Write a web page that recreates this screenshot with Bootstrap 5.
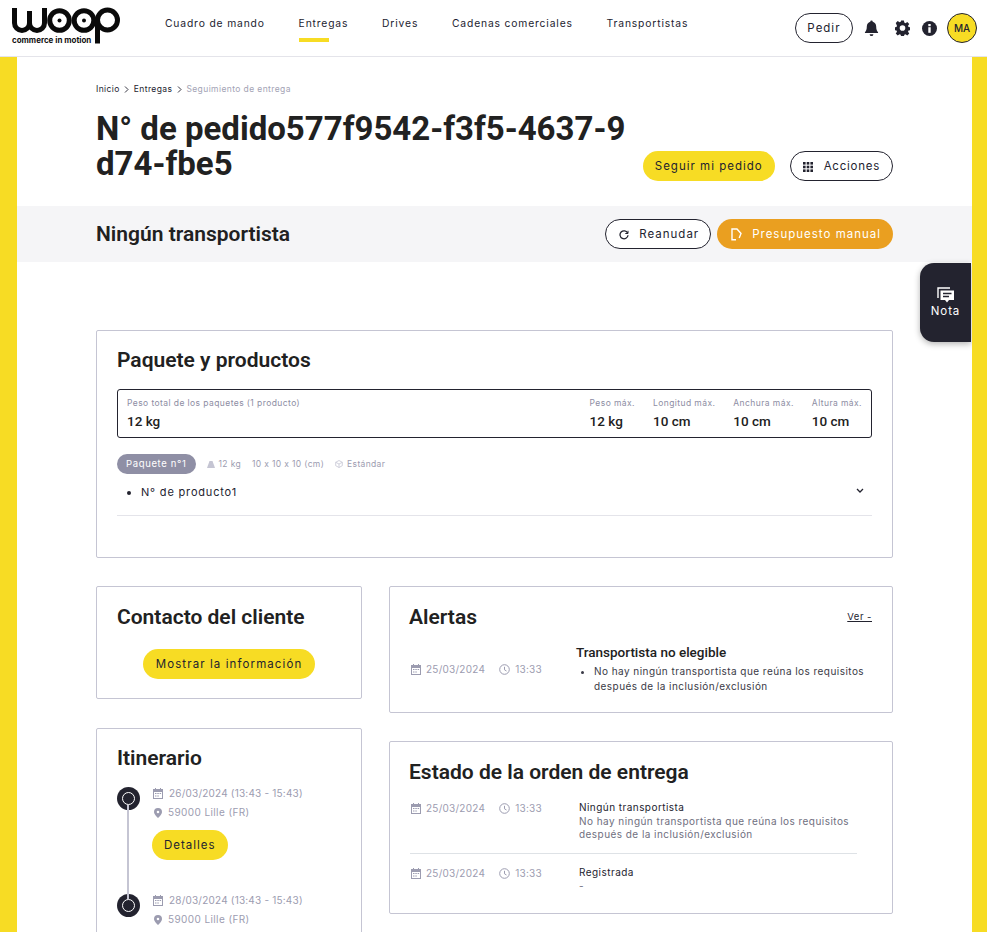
<!DOCTYPE html>
<html lang="es">
<head>
  <meta charset="UTF-8" />
  <meta name="viewport" content="width=device-width, initial-scale=1.0" />
  <title>Seguimiento de entrega</title>
  <link href="https://cdn.jsdelivr.net/npm/bootstrap@5.3.5/dist/css/bootstrap.min.css" rel="stylesheet" />
  <style>
    html, body { height: 932px; overflow: hidden; }
    body { font-family: "Inter", "Open Sans", sans-serif; color: #23232f; background: #f7dc24; font-size: 11px; letter-spacing: .2px; }
    h1, h2, h3, .heavy { font-family: Roboto, sans-serif; letter-spacing: 0; color: #212121; }

    .topbar { height: 57px; background: #fff; border-bottom: 1px solid #e4e4ea; padding: 0 10px 0 12px; }
    .logo-box { width: 111px; height: 44px; margin-top: 7px; flex: none; position: relative; }
    .logo-box span { position: absolute; left: 0; top: 29px; font: 700 8px/1 "Inter", sans-serif; letter-spacing: -.02px; color: #111; }
    .menu { margin-left: 42px; gap: 33.8px; }
    .menu a { color: #23232f; text-decoration: none; font-size: 10.3px; letter-spacing: .85px; height: 42px; padding-top: 16px; display: block; position: relative; }
    .menu a.on::after { content: ""; position: absolute; left: 0; width: 30px; bottom: 0; height: 4px; background: #f7dc24; }
    .top-right svg { flex: none; }

    .woop-btn { height: 30px; padding: 1px 12px 0; font-size: 11.5px; letter-spacing: 1px; border-radius: 15px; color: #23232f; display: inline-flex; align-items: center; gap: 10px; }
    .btn-line { background: #fff; border: 1px solid #23232f; }
    .btn-line:hover { background: #fff; border-color: #23232f; color: #23232f; }
    .btn-yellow { background: #f7dc24; border: 0; }
    .btn-orange { background: #ea9f20; border: 0; color: #fff; padding-left: 14px; }
    .btn-pedir { padding-left: 11.5px; padding-right: 11.5px; margin-right: 7px; }
    .btn-acciones { gap: 11px; letter-spacing: .75px; }
    .btn-reanudar { padding-left: 13px; padding-right: 11px; }
    .btn-wide { padding-left: 12.5px; padding-right: 12.5px; letter-spacing: 1.1px; }
    .avatar { width: 30px; height: 30px; border-radius: 50%; background: #f7dc24; border: 1px solid #23232f; font-size: 10px; font-weight: 500; letter-spacing: 0; }

    .sheet { margin: 0 15px 0 17px; background: #fff; height: 875px; position: relative; overflow: hidden; }
    .pad-x { padding-left: 79px; padding-right: 79px; }
    .crumbs { padding-top: 26px; font-size: 8.5px; height: 54px; gap: 4.5px; letter-spacing: .4px; color: #23232f; }
    .crumbs svg { margin-top: 3px; }
    .crumbs .off { color: #a3a3b5; }
    .order-title { font-size: 33px; line-height: 35px; font-weight: 700; width: 532px; margin: 0; word-break: break-all; }
    .head-row { height: 95px; }
    .head-actions { gap: 15px; padding-top: 40px; }
    .band { height: 56px; background: #f5f5f7; }
    .band h2 { font-size: 21px; font-weight: 600; margin: 2px 0 0; }
    .band-actions { gap: 6px; }

    .note-tab { position: absolute; right: 1px; top: 206px; width: 51px; height: 79px; background: #23232f; border-radius: 14px 0 0 14px; color: #fff; box-shadow: 0 2px 6px rgba(0,0,0,.3); font-size: 11.5px; line-height: 14px; letter-spacing: .9px; }

    .panel { background: #fff; border: 1px solid #c5c5d3; border-radius: 2px; padding: 0 20px; }
    .panel h3 { font-size: 21px; font-weight: 600; margin: 0; line-height: 26px; }
    .panel-pack { margin-top: 68px; height: 228px; padding-top: 16px; }
    .sum-box { margin-top: 16px; height: 49px; border: 1px solid #23232f; border-radius: 3px; padding: 7px 9px 0; }
    .sum-box small { display: block; font-size: 8.5px; color: #8d8da3; line-height: 12px; letter-spacing: .42px; }
    .sum-box b { display: block; font-family: Roboto, sans-serif; font-size: 13.5px; font-weight: 500; line-height: 20px; letter-spacing: 0; margin-top: 2px; color: #212121; }
    .sum-cols { gap: 18px; }
    .pack-pill { background: #8f8fa5; color: #fff; height: 20px; padding: 0 9px; border-radius: 10px; font-size: 9.5px; letter-spacing: .65px; font-weight: 400; display: inline-flex; align-items: center; }
    .pack-head { margin-top: 16px; }
    .pack-meta { color: #9c9cb0; font-size: 8.5px; gap: 11px; margin-left: 11px; letter-spacing: .35px; }
    .pack-meta span { display: inline-flex; align-items: center; gap: 4px; }
    .pack-row { margin-top: 10px; height: 32px; border-bottom: 1px solid #e4e4ea; font-size: 11px; letter-spacing: .82px; }
    .pack-row ul { margin: 0; padding-left: 24px; }

    .cols { margin-top: 28px; gap: 27px; }
    .col-left { width: 266px; flex: none; gap: 29px; }
    .col-right { width: 504px; flex: none; gap: 28px; }
    .col-right h3 { margin-left: -1px; }
    .panel-contact { height: 113px; padding-top: 17px; }
    .contact-action { margin-top: 19px; }
    .panel-alerts { height: 127px; padding-top: 17px; }
    .panel-route { height: 300px; padding-top: 16px; }
    .panel-state { height: 173px; padding-top: 17px; }
    .see-link { color: #23232f; font-size: 9.5px; letter-spacing: .5px; }
    .when { color: #9c9cb0; font-size: 10px; letter-spacing: .25px; gap: 14px; flex: none; padding-left: 1px; }
    .when span { display: inline-flex; align-items: center; gap: 5px; }
    .alert-body { margin-top: 13px; }
    .alert-when { width: 166px; height: 52px; }
    .alert-title { font-size: 13.5px; font-weight: 500; line-height: 18px; }
    .alert-list { font-size: 10px; line-height: 15px; margin: 3px 0 0; padding-left: 18px; letter-spacing: .45px; color: #3a3a46; }
    .state-row { font-size: 10px; line-height: 13.5px; letter-spacing: .45px; }
    .state-first { margin-top: 17px; margin-right: 15px; height: 52px; }
    .state-next { margin-top: 13px; }
    .state-when { width: 169px; height: 13px; align-items: center; }
    .state-text { margin-top: -1px; }
    .muted-line { color: #6f6f80; }

    .stop { position: relative; padding-left: 35px; height: 107px; display: flex; flex-direction: column; align-items: flex-start; }
    .stop-first { margin-top: 16px; }
    .stop-dot { position: absolute; left: 0; top: 0; width: 23px; height: 23px; border-radius: 50%; background: #23232f; }
    .stop-dot::after { content: ""; position: absolute; left: 5px; top: 5px; width: 13px; height: 13px; border: 1px solid #fff; border-radius: 50%; }
    .stop-wire { position: absolute; left: 10px; top: 18px; width: 2px; height: 94px; background: #c5c5d3; z-index: 1; }
    .stop-line { display: flex; align-items: center; color: #9c9cb0; font-size: 10px; line-height: 19px; }
    .stop-date { gap: 6px; letter-spacing: .2px; padding-left: 1px; margin-top: -3px; }
    .stop-place { gap: 6px; letter-spacing: .4px; padding-left: 2px; }
  </style>
</head>
<body>
  <svg width="0" height="0" class="position-absolute">
    <symbol id="ic-cal" viewBox="0 0 10 11"><path fill="#9c9cb0" fill-rule="evenodd" d="M2 0h1v1h4V0h1v1h2v10H0V1h2zM1 4v6h8V4z"/><path fill="#9c9cb0" d="M2 5h1.500v1H2zM4.300 5h1.500v1H4.300zM6.600 5h1.500v1H6.600zM2 7.500h1.500v1H2zM4.300 7.500h1.500v1H4.300z"/></symbol>
    <symbol id="ic-clock" viewBox="0 0 11 11"><circle cx="5.500" cy="5.500" r="4.800" fill="none" stroke="#9c9cb0"/><path d="M5.500 2.800v3l2 1.200" fill="none" stroke="#9c9cb0"/></symbol>
    <symbol id="ic-pin" viewBox="0 0 8 10"><path fill="#9c9cb0" fill-rule="evenodd" d="M4 0a4 4 0 0 1 4 4c0 2.500-4 6-4 6S0 6.500 0 4a4 4 0 0 1 4-4zm0 2.700a1.300 1.300 0 1 0 0 2.600 1.300 1.300 0 0 0 0-2.600z"/></symbol>
    <symbol id="ic-crumb" viewBox="0 0 5 7"><path d="M1 .5l3 3-3 3" fill="none" stroke="#23232f" stroke-width=".9"/></symbol>
  </svg>

  <nav class="topbar d-flex">
    <div class="logo-box">
      <svg width="110" height="37" viewBox="0 0 110 37" fill="none" stroke="#0a0a0a" stroke-width="5">
        <path d="M2.500 1v15a7.500 7.500 0 0 0 15 0V4v12a7.500 7.500 0 0 0 15 0V1" />
        <circle cx="47.500" cy="13.500" r="9.800" />
        <circle cx="47.500" cy="13.500" r="2" fill="#0a0a0a" stroke="none" />
        <circle cx="72" cy="13.500" r="9.800" />
        <circle cx="72" cy="13.500" r="2" fill="#0a0a0a" stroke="none" />
        <circle cx="95.500" cy="13" r="10" />
        <path d="M85.500 12v24.500" />
      </svg>
      <span>commerce in motion</span>
    </div>
    <div class="menu d-flex">
      <a href="#">Cuadro de mando</a>
      <a href="#" class="on">Entregas</a>
      <a href="#">Drives</a>
      <a href="#">Cadenas comerciales</a>
      <a href="#">Transportistas</a>
    </div>
    <div class="top-right d-flex align-items-center ms-auto">
      <a href="#" class="btn woop-btn btn-line btn-pedir">Pedir</a>
      <svg class="ms-1" width="15" height="17" viewBox="0 0 16 17" fill="#23232f"><path d="M8 0a1.300 1.300 0 0 0-1.300 1.400C4.400 2 3 4 3 6.400c0 3.400-.8 4.600-2 6v1h14v-1c-1.200-1.400-2-2.600-2-6 0-2.400-1.400-4.400-3.700-5A1.300 1.300 0 0 0 8 0zM6 14.500a2 2 0 0 0 4 0z"/></svg>
      <svg class="ms-3" width="15" height="16" viewBox="0 0 16 16" fill="#23232f"><path fill-rule="evenodd" d="M6.500 0h3l.4 2.200 1.300.6 1.900-1.300 2.100 2.200-1.300 1.900.5 1.300 2.300.4v3l-2.300.4-.5 1.300 1.300 1.900-2.100 2.100-1.900-1.300-1.300.5-.4 2.300h-3l-.4-2.300-1.300-.5-1.900 1.300-2.100-2.100 1.300-1.900-.5-1.300-2.300-.4v-3l2.300-.4.500-1.300L.8 2.700 2.900.6l1.900 1.300 1.300-.5zM8 5a3 3 0 1 0 0 6 3 3 0 0 0 0-6z"/></svg>
      <svg style="margin-left: 12px" width="15" height="15" viewBox="0 0 15 15"><circle cx="7.500" cy="7.500" r="7.500" fill="#23232f"/><rect x="6.300" y="6.200" width="2.400" height="5.600" fill="#fff"/><rect x="6.300" y="3" width="2.400" height="2.200" fill="#fff"/></svg>
      <div class="avatar d-flex align-items-center justify-content-center" style="margin-left: 10px">MA</div>
    </div>
  </nav>

  <div class="sheet">
    <div class="pad-x">
      <div class="crumbs d-flex">
        <span>Inicio</span><svg width="5" height="7"><use href="#ic-crumb"/></svg><span>Entregas</span><svg width="5" height="7"><use href="#ic-crumb"/></svg><span class="off">Seguimiento de entrega</span>
      </div>
      <div class="head-row d-flex justify-content-between">
        <h1 class="order-title">N° de pedido577f9542-f3f5-4637-9d74-fbe5</h1>
        <div class="head-actions d-flex">
          <a href="#" class="btn woop-btn btn-yellow">Seguir mi pedido</a>
          <a href="#" class="btn woop-btn btn-line btn-acciones">
            <svg width="10" height="10" viewBox="0 0 10 10" fill="#23232f"><rect width="2.600" height="2.600"/><rect x="3.700" width="2.600" height="2.600"/><rect x="7.400" width="2.600" height="2.600"/><rect y="3.700" width="2.600" height="2.600"/><rect x="3.700" y="3.700" width="2.600" height="2.600"/><rect x="7.400" y="3.700" width="2.600" height="2.600"/><rect y="7.400" width="2.600" height="2.600"/><rect x="3.700" y="7.400" width="2.600" height="2.600"/><rect x="7.400" y="7.400" width="2.600" height="2.600"/></svg>
            Acciones
          </a>
        </div>
      </div>
    </div>

    <div class="band pad-x d-flex align-items-center justify-content-between">
      <h2>Ningún transportista</h2>
      <div class="band-actions d-flex">
        <a href="#" class="btn woop-btn btn-line btn-reanudar">
          <svg width="10" height="10" viewBox="0 0 10 10" fill="none" stroke="#23232f" stroke-width="1.300"><path d="M8.600 3a4 4 0 1 0 .4 2.200"/><path d="M9 .8v2.700H6.300" stroke-width="1"/></svg>
          Reanudar
        </a>
        <a href="#" class="btn woop-btn btn-orange">
          <svg width="11" height="13" viewBox="0 0 11 13" fill="none" stroke="#fff" stroke-width="1.400"><path d="M5 11.800H1V1h5l4 4.500-1.800 4.500"/></svg>
          Presupuesto manual
        </a>
      </div>
    </div>

    <div class="note-tab d-flex flex-column align-items-center justify-content-center">
      <svg width="18" height="17" viewBox="0 0 18 17" fill="none"><path d="M1 11V1h12" stroke="#fff" stroke-width="1.400"/><path d="M3.500 3.500H17V13h-5l-2 2.500L8 13H3.500z" fill="#fff"/><path d="M6 6.500h8.500M6 9.500h6" stroke="#23232f" stroke-width="1.300"/></svg>
      Nota
    </div>

    <div class="pad-x">
      <section class="panel panel-pack">
        <h3>Paquete y productos</h3>
        <div class="sum-box d-flex justify-content-between">
          <div><small>Peso total de los paquetes (1 producto)</small><b>12 kg</b></div>
          <div class="sum-cols d-flex">
            <div><small>Peso máx.</small><b>12 kg</b></div>
            <div><small>Longitud máx.</small><b>10 cm</b></div>
            <div><small>Anchura máx.</small><b>10 cm</b></div>
            <div><small>Altura máx.</small><b>10 cm</b></div>
          </div>
        </div>
        <div class="pack-head d-flex align-items-center">
          <span class="pack-pill">Paquete n°1</span>
          <div class="pack-meta d-flex">
            <span><svg width="8" height="7" viewBox="0 0 8 7" fill="#c5c5d3"><path d="M2.500 0h3L8 7H0z"/></svg>12 kg</span>
            <span>10 x 10 x 10 (cm)</span>
            <span><svg width="8" height="8" viewBox="0 0 8 8" fill="none" stroke="#c5c5d3" stroke-width=".8"><path d="M4 .5l3.300 1.800v3.400L4 7.500.7 5.700V2.300zM.7 2.300L4 4l3.300-1.700M4 4v3.500"/></svg>Estándar</span>
          </div>
        </div>
        <div class="pack-row d-flex justify-content-between align-items-start">
          <ul><li>N° de producto1</li></ul>
          <svg class="me-2 mt-1" width="8" height="6" viewBox="0 0 8 6" fill="none" stroke="#23232f" stroke-width="1.300"><path d="M1 1l3 3 3-3"/></svg>
        </div>
      </section>

      <div class="cols d-flex align-items-start">
        <div class="col-left d-flex flex-column">
          <section class="panel panel-contact">
            <h3>Contacto del cliente</h3>
            <div class="contact-action text-center"><a href="#" class="btn woop-btn btn-yellow btn-wide">Mostrar la información</a></div>
          </section>
          <section class="panel panel-route">
            <h3>Itinerario</h3>
            <div class="stop stop-first">
              <div class="stop-dot"></div><div class="stop-wire"></div>
              <div class="stop-line stop-date"><svg width="10" height="11"><use href="#ic-cal"/></svg>26/03/2024 (13:43 - 15:43)</div>
              <div class="stop-line stop-place"><svg width="8" height="10"><use href="#ic-pin"/></svg>59000 Lille (FR)</div>
              <a href="#" class="btn woop-btn btn-yellow mt-2">Detalles</a>
            </div>
            <div class="stop">
              <div class="stop-dot"></div>
              <div class="stop-line stop-date"><svg width="10" height="11"><use href="#ic-cal"/></svg>28/03/2024 (13:43 - 15:43)</div>
              <div class="stop-line stop-place"><svg width="8" height="10"><use href="#ic-pin"/></svg>59000 Lille (FR)</div>
            </div>
          </section>
        </div>
        <div class="col-right d-flex flex-column">
          <section class="panel panel-alerts">
            <div class="d-flex justify-content-between align-items-center">
              <h3>Alertas</h3>
              <a href="#" class="see-link">Ver -</a>
            </div>
            <div class="alert-body d-flex">
              <div class="when alert-when d-flex align-items-center">
                <span><svg width="10" height="11"><use href="#ic-cal"/></svg>25/03/2024</span>
                <span><svg width="11" height="11"><use href="#ic-clock"/></svg>13:33</span>
              </div>
              <div>
                <div class="alert-title heavy">Transportista no elegible</div>
                <ul class="alert-list"><li>No hay ningún transportista que reúna los requisitos<br>después de la inclusión/exclusión</li></ul>
              </div>
            </div>
          </section>
          <section class="panel panel-state">
            <h3>Estado de la orden de entrega</h3>
            <div class="state-first d-flex state-row border-bottom">
              <div class="when state-when d-flex">
                <span><svg width="10" height="11"><use href="#ic-cal"/></svg>25/03/2024</span>
                <span><svg width="11" height="11"><use href="#ic-clock"/></svg>13:33</span>
              </div>
              <div class="state-text"><div>Ningún transportista</div><div class="muted-line">No hay ningún transportista que reúna los requisitos<br>después de la inclusión/exclusión</div></div>
            </div>
            <div class="state-next d-flex state-row">
              <div class="when state-when d-flex">
                <span><svg width="10" height="11"><use href="#ic-cal"/></svg>25/03/2024</span>
                <span><svg width="11" height="11"><use href="#ic-clock"/></svg>13:33</span>
              </div>
              <div class="state-text"><div>Registrada</div><div class="muted-line">-</div></div>
            </div>
          </section>
        </div>
      </div>
    </div>
  </div>

  <script src="https://cdn.jsdelivr.net/npm/bootstrap@5.3.5/dist/js/bootstrap.bundle.min.js"></script>
</body>
</html>
